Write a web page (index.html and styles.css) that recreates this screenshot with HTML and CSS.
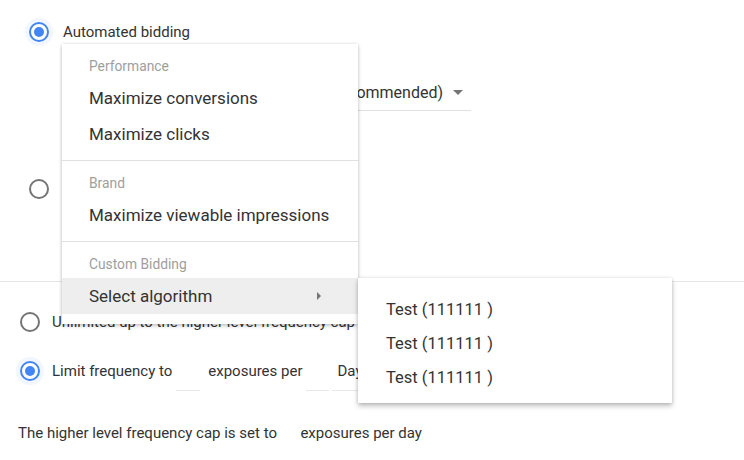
FILE: index.html
```html
<!DOCTYPE html>
<html>
<head>
<meta charset="utf-8">
<link rel="stylesheet" href="styles.css">
</head>
<body>
<div class="page">
  <section class="bidding">
    <div class="radio-row">
      <span class="radio checked"></span>
      <span class="label">Automated bidding</span>
    </div>
    <div class="select strategy">
      <span class="select-value">Maximize conversions (recommended)</span>
      <span class="caret"></span>
    </div>
    <div class="radio-row second">
      <span class="radio"></span>
      <span class="label">Fixed bidding</span>
    </div>
  </section>

  <section class="frequency">
    <div class="radio-row freq">
      <span class="radio"></span>
      <span class="label">Unlimited up to the higher level frequency cap</span>
    </div>
    <div class="radio-row freq limit">
      <span class="radio checked"></span>
      <span class="label">Limit frequency to</span>
      <span class="field num"></span>
      <span class="label">exposures per</span>
      <span class="field num2"></span>
      <span class="field period"><span class="label">Day</span></span>
    </div>
    <p class="note">The higher level frequency cap is set to <span class="gap"></span> exposures per day</p>
  </section>

  <div class="menu main-menu">
    <div class="group">
      <div class="group-title">Performance</div>
      <div class="item">Maximize conversions</div>
      <div class="item">Maximize clicks</div>
    </div>
    <div class="group">
      <div class="group-title">Brand</div>
      <div class="item">Maximize viewable impressions</div>
    </div>
    <div class="group last">
      <div class="group-title">Custom Bidding</div>
      <div class="item active">Select algorithm <span class="submenu-arrow"></span></div>
    </div>
  </div>

  <div class="menu sub-menu">
    <div class="item">Test (111111 )</div>
    <div class="item">Test (111111 )</div>
    <div class="item">Test (111111 )</div>
  </div>
</div>
</body>
</html>
```

FILE: styles.css
```css
html, body {
  margin: 0;
  padding: 0;
  background: #fff;
}

body {
  font-family: Roboto, "Liberation Sans", Arial, sans-serif;
  color: #333;
}

.page {
  position: relative;
  width: 744px;
  height: 460px;
  overflow: hidden;
}

.radio-row {
  display: flex;
  align-items: center;
  height: 20px;
}

.radio {
  box-sizing: border-box;
  width: 20px;
  height: 20px;
  border: 2px solid #757575;
  border-radius: 50%;
  flex: none;
  position: relative;
}

.radio.checked {
  border-color: #4285f4;
  box-shadow: 0 0 0 4px rgba(66, 133, 244, 0.07);
}

.radio.checked::after {
  content: "";
  position: absolute;
  left: 3px;
  top: 3px;
  width: 10px;
  height: 10px;
  border-radius: 50%;
  background: #4285f4;
}

.label {
  font-size: 15px;
  line-height: 20px;
  white-space: nowrap;
}

.bidding {
  padding: 22px 0 82px 29px;
  border-bottom: 1px solid #e6e6e6;
}

.bidding .radio-row {
  gap: 14px;
}

.select {
  display: flex;
  align-items: center;
  box-sizing: border-box;
  border-bottom: 1px solid #e0e0e0;
}

.strategy {
  margin: 32px 0 0 34px;
  width: 408px;
  height: 37px;
  justify-content: flex-end;
  gap: 10px;
  padding-right: 8px;
  font-size: 16px;
}

.caret {
  width: 0;
  height: 0;
  border-left: 5px solid transparent;
  border-right: 5px solid transparent;
  border-top: 5px solid #757575;
}

.radio-row.second {
  margin-top: 68px;
}

.frequency {
  padding-left: 20px;
}

.freq {
  gap: 12px;
}

.radio-row.freq:first-child {
  margin-top: 30px;
}

.limit {
  margin-top: 29px;
  gap: 0;
  align-items: flex-start;
}

.limit .radio {
  margin-right: 12px;
}

.field {
  box-sizing: border-box;
  height: 30px;
  border-bottom: 1px solid #e8e8e8;
  flex: none;
}

.num {
  width: 24px;
  margin: 0 8px 0 4px;
}

.num2 {
  width: 23px;
  margin-left: 3px;
}

.period {
  width: 60px;
  margin-left: 3px;
  padding-left: 6px;
}

.note {
  margin: 42px 0 0 -2px;
  font-size: 15px;
  line-height: 20px;
}

.gap {
  display: inline-block;
  width: 16px;
}

/* Menus overlay the form */
.menu {
  position: absolute;
  background: #fff;
  box-sizing: border-box;
  box-shadow: 0 2px 4px rgba(0, 0, 0, 0.2), 0 0 3px rgba(0, 0, 0, 0.12);
  z-index: 2;
}

.main-menu {
  left: 62px;
  top: 44px;
  width: 296px;
}

.group {
  padding: 8px 0;
  border-top: 1px solid #e0e0e0;
}

.group:first-child {
  border-top: 0;
}

.group.last {
  padding-bottom: 10px;
}

.group-title {
  height: 28px;
  line-height: 28px;
  padding-left: 27px;
  font-size: 13.8px;
  color: #9e9e9e;
}

.item {
  display: flex;
  align-items: center;
  height: 36px;
  padding-left: 27px;
  font-size: 17px;
  color: #333;
  white-space: nowrap;
}

.item.active {
  background: #eeeeee;
}

.submenu-arrow {
  margin-left: auto;
  margin-right: 37px;
  width: 0;
  height: 0;
  border-top: 4px solid transparent;
  border-bottom: 4px solid transparent;
  border-left: 4px solid #757575;
}

.sub-menu {
  left: 358px;
  top: 278px;
  width: 314px;
  height: 125px;
  padding-top: 14px;
  box-shadow: 0 3px 5px rgba(0, 0, 0, 0.25), 0 0 3px rgba(0, 0, 0, 0.12);
  z-index: 3;
}

.sub-menu .item {
  height: 34px;
  padding-left: 28px;
  font-size: 16.5px;
}
```
